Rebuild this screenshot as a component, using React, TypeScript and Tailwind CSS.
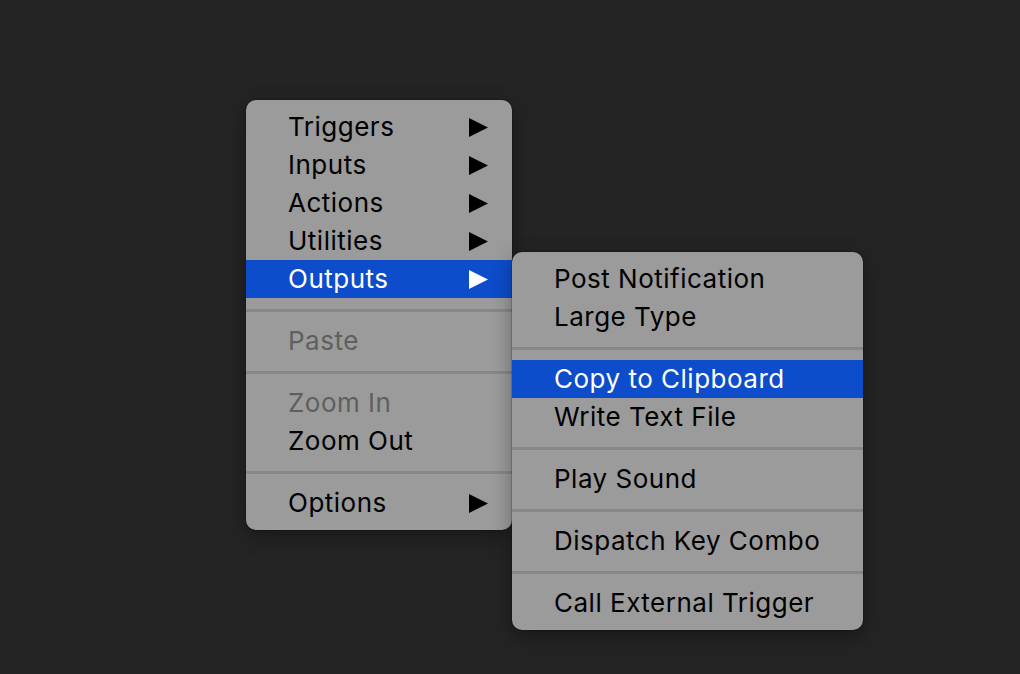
type Entry =
  | { kind: "item"; label: string; submenu?: boolean; active?: boolean; disabled?: boolean }
  | { kind: "sep" };

const mainMenu: Entry[] = [
  { kind: "item", label: "Triggers", submenu: true },
  { kind: "item", label: "Inputs", submenu: true },
  { kind: "item", label: "Actions", submenu: true },
  { kind: "item", label: "Utilities", submenu: true },
  { kind: "item", label: "Outputs", submenu: true, active: true },
  { kind: "sep" },
  { kind: "item", label: "Paste", disabled: true },
  { kind: "sep" },
  { kind: "item", label: "Zoom In", disabled: true },
  { kind: "item", label: "Zoom Out" },
  { kind: "sep" },
  { kind: "item", label: "Options", submenu: true },
];

const outputsMenu: Entry[] = [
  { kind: "item", label: "Post Notification" },
  { kind: "item", label: "Large Type" },
  { kind: "sep" },
  { kind: "item", label: "Copy to Clipboard", active: true },
  { kind: "item", label: "Write Text File" },
  { kind: "sep" },
  { kind: "item", label: "Play Sound" },
  { kind: "sep" },
  { kind: "item", label: "Dispatch Key Combo" },
  { kind: "sep" },
  { kind: "item", label: "Call External Trigger" },
];

function Arrow({ active }: { active?: boolean }) {
  return (
    <svg width="19" height="19" viewBox="0 0 19 19" className="shrink-0">
      <path d="M0 0 L19 9.5 L0 19 Z" fill={active ? "#ffffff" : "#000000"} />
    </svg>
  );
}

function Menu({ entries, width }: { entries: Entry[]; width: string }) {
  return (
    <div className={`${width} rounded-[10px] bg-[#9b9b9b] py-2 shadow-[0_0_0_1px_rgba(0,0,0,0.15),0_6px_20px_rgba(0,0,0,0.35)]`}>
      {entries.map((e, i) =>
        e.kind === "sep" ? (
          <div key={i} className="flex h-6 items-center">
            <div className="h-[3px] w-full bg-[#878787]" />
          </div>
        ) : (
          <div
            key={i}
            className={`flex h-[38px] items-center justify-between pl-[42px] pr-6 text-[26px] leading-[38px] tracking-[0.5px] ${
              e.active
                ? "bg-[#0d4ccb] text-white"
                : e.disabled
                  ? "text-[#5f5f5f]"
                  : "text-black"
            }`}
          >
            <span>{e.label}</span>
            {e.submenu && <Arrow active={e.active} />}
          </div>
        )
      )}
    </div>
  );
}

export default function App() {
  return (
    <div
      className="flex h-[674px] w-[1020px] items-start overflow-hidden bg-[#242424] pl-[246px] pt-[100px]"
      style={{ fontFamily: "Inter, 'Liberation Sans', sans-serif" }}
    >
      <Menu entries={mainMenu} width="w-[266px]" />
      <div className="mt-[152px]">
        <Menu entries={outputsMenu} width="w-[351px]" />
      </div>
    </div>
  );
}
